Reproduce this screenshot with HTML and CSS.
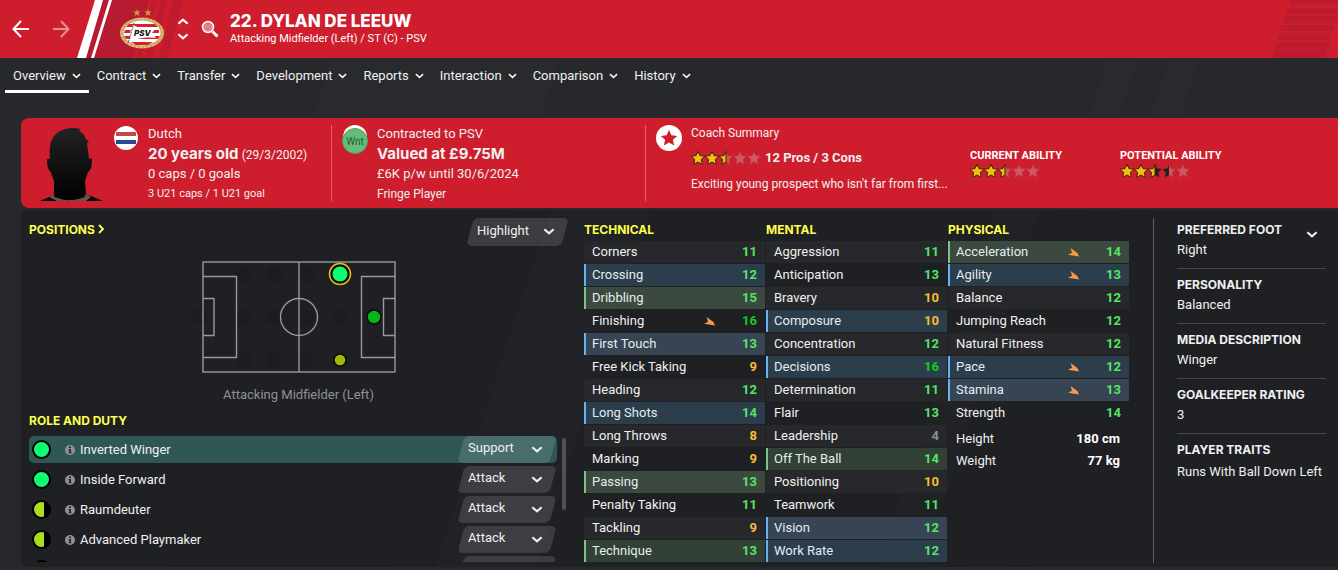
FILE: index.html
```
<!DOCTYPE html>
<html lang="en">

<head>
    <meta charset="UTF-8">
    <meta name="viewport" content="width=device-width, initial-scale=1.0">
    <title>Dylan de Leeuw - Overview</title>
    <link rel="stylesheet" href="styles.css">
</head>

<body>
    <!-- shared icons -->
    <svg class="icon-defs" aria-hidden="true">
        <symbol id="chevron" viewBox="0 0 10 6">
            <path d="M1 1 L5 4.6 L9 1" fill="none" stroke="currentColor" stroke-width="1.8"/>
        </symbol>
        <symbol id="info" viewBox="0 0 10 10">
            <circle cx="5" cy="5" r="5" fill="#8f9092"/>
            <path d="M4 1.6h2v1.5H4zM3.6 4h2.3v3.4h.7v.9H3.5v-.9h.7V4.9h-.6z" fill="#1f2024"/>
        </symbol>
        <symbol id="arrow" viewBox="0 0 11 9">
            <path d="M2.6 0 L9.4 5 L11 8.6 L0 6.8 L4 4.8 Z" fill="#f9974a"/>
        </symbol>
        <symbol id="star" viewBox="0 0 14 14" overflow="visible">
            <path d="M7 .4 L9 4.6 L13.8 5.1 L10.3 8.4 L11.3 13.4 L7 11 L2.7 13.4 L3.7 8.4 L.2 5.1 L5 4.6 Z"/>
        </symbol>
        <symbol id="half-star" viewBox="0 0 14 14" overflow="visible">
            <path d="M7 .4 L7 11 L2.7 13.4 L3.7 8.4 L.2 5.1 L5 4.6 Z"/>
        </symbol>
    </svg>

    <header class="top-bar">
        <svg class="stripes-left" viewBox="0 0 190 58" aria-hidden="true">
            <path d="M103 0H149L133 58H86Z" fill="#b71b31"/>
            <path d="M152 0h5l-16 58h-5zM161 0h7l-16 58h-7zM173 0h10l-16 58h-8z" fill="#be1b2f"/>
            <path d="M95 0h8L86 58h-9zM109 0h3L94 58h-3z" fill="#fff"/>
        </svg>
        <svg class="stripes-right" viewBox="0 0 66 58" aria-hidden="true">
            <path d="M18 0H66V5H17zM16 8H66V14H14zM13 16H66L65 23H11zM10 25H63L61 31H8zM8 33H60L58 40H5zM4 42H58L56 49H3zM2 50H55L53 58H0z" fill="#bd1c30"/>
        </svg>
        <button class="icon-btn back" aria-label="Back">
            <svg width="18" height="18" viewBox="0 0 18 18"><path d="M17 9H1.5M9 1L1.5 9L9 17" fill="none" stroke="currentColor" stroke-width="2"/></svg>
        </button>
        <button class="icon-btn forward" aria-label="Forward">
            <svg width="18" height="18" viewBox="0 0 18 18"><path d="M1 9H16.5M9 1L16.5 9L9 17" fill="none" stroke="currentColor" stroke-width="2"/></svg>
        </button>
        <a href="#" class="crest" aria-label="PSV">
            <svg width="44" height="40" viewBox="0 0 44 40">
                <path d="M17 0l1 2.600h2.800l-2.200 1.700.8 2.700-2.400-1.600-2.400 1.600.8-2.700L13.200 2.600H16zM28 0l1 2.600h2.800l-2.200 1.700.8 2.700-2.400-1.600-2.400 1.600.8-2.700-2.200-1.700H27z" fill="#c49a3e"/>
                <ellipse cx="22" cy="24" rx="22" ry="15.500" fill="#cda85b"/>
                <ellipse cx="22" cy="24" rx="21" ry="14.500" fill="none" stroke="#ead9ac" stroke-dasharray="2 2"/>
                <ellipse cx="22" cy="24" rx="18.500" ry="12.500" fill="#fff"/>
                <path d="M9 15h26l3 3H6zM5 21h34v3H4zM4 27h36l-2 3H6zM11 33h22l-5 3H16z" fill="#d9202f"/>
                <path d="M13 16Q21 21 36 19L32 24L36 29Q23 27 11 32Q8 24 13 16Z" fill="#fff"/>
                <path d="M14 14L8 34" stroke="#444" stroke-dasharray="2 1"/>
                <text x="14" y="27" class="crest-text">PSV</text>
            </svg>
        </a>
        <div class="switcher">
            <button class="icon-btn" aria-label="Previous player"><svg class="flip" width="12" height="7"><use href="#chevron"/></svg></button>
            <button class="icon-btn" aria-label="Next player"><svg width="12" height="7"><use href="#chevron"/></svg></button>
        </div>
        <button class="icon-btn search" aria-label="Search">
            <svg width="18" height="18" viewBox="0 0 18 18"><circle cx="7" cy="7" r="5.500" fill="#e8808b" stroke="#fff" stroke-width="1.500"/><path d="M11.500 11.500L16.500 16.500" stroke="#fff" stroke-width="3"/></svg>
        </button>
        <div class="title">
            <h1>22. DYLAN DE LEEUW</h1>
            <p>Attacking Midfielder (Left) / ST (C) - PSV</p>
        </div>
    </header>

    <nav class="tabs">
        <button class="tab active">Overview <svg><use href="#chevron"/></svg></button>
        <button class="tab">Contract <svg><use href="#chevron"/></svg></button>
        <button class="tab">Transfer <svg><use href="#chevron"/></svg></button>
        <button class="tab">Development <svg><use href="#chevron"/></svg></button>
        <button class="tab">Reports <svg><use href="#chevron"/></svg></button>
        <button class="tab">Interaction <svg><use href="#chevron"/></svg></button>
        <button class="tab">Comparison <svg><use href="#chevron"/></svg></button>
        <button class="tab">History <svg><use href="#chevron"/></svg></button>
    </nav>

    <main>
        <section class="summary">
            <div class="cell person">
                <svg class="portrait" width="66" height="76" viewBox="0 0 66 76" aria-hidden="true">
                    <defs><linearGradient id="shade" x2="0" y2="1"><stop offset="0" stop-color="#222"/><stop offset="1" stop-color="#000"/></linearGradient></defs>
                    <path d="M1 75L15 69V55Q12 48 12 46Q8 44 8 34Q8 32 11 33Q9 14 18 7Q28 0 42 3L40 5Q46 8 46 12L50 16L48 17L50 33Q53 31 53 34Q53 44 49 46L46 55L47 68L64 75Z" fill="url(#shade)"/>
                    <path d="M14 69Q31 80 48 68L52 71L47 75H18L10 71Z" fill="#695053"/>
                    <path d="M18 69Q31 76 44 68L46 71Q32 77 15 71Z" fill="#050505"/>
                </svg>
                <svg class="badge" width="24" height="24" viewBox="0 0 24 24" aria-label="Netherlands"><circle cx="12" cy="12" r="12" fill="#fff"/><path d="M2 6h20v4H2z" fill="#c2474f"/><path d="M2 14h20v4H2z" fill="#2b4a94"/></svg>
                <div class="lines">
                    <p>Dutch</p>
                    <p><strong>20 years old</strong> <small>(29/3/2002)</small></p>
                    <p>0 caps / 0 goals</p>
                    <p class="youth">3 U21 caps / 1 U21 goal</p>
                </div>
            </div>
            <div class="cell contract">
                <svg class="badge" width="26" height="29" viewBox="0 0 26 29" aria-label="Wanted"><circle cx="13" cy="12" r="12" fill="#fff"/><circle cx="13" cy="16" r="12.500" fill="#66bb7b" stroke="#4aa468"/><text x="13" y="20" text-anchor="middle" class="badge-text">Wnt</text></svg>
                <div class="lines">
                    <p>Contracted to PSV</p>
                    <p><strong>Valued at £9.75M</strong></p>
                    <p>£6K p/w until 30/6/2024</p>
                    <p><small>Fringe Player</small></p>
                </div>
            </div>
            <div class="cell coach">
                <svg class="badge" width="26" height="26" viewBox="0 0 26 26" aria-hidden="true"><circle cx="13" cy="13" r="13" fill="#fff"/><path d="M13 5l2.400 5.300 5.800.6-4.300 3.900 1.200 5.700L13 17.600l-5.100 2.900 1.200-5.700-4.300-3.900 5.800-.6z" fill="#ce1d2c"/></svg>
                <div class="coach-lines">
                    <p><small>Coach Summary</small></p>
                    <p class="rating">
                        <span class="stars"><svg class="on"><use href="#star"/></svg><svg class="on"><use href="#star"/></svg><svg><use class="off" href="#star"/><use class="on" href="#half-star"/></svg><svg class="off"><use href="#star"/></svg><svg class="off"><use href="#star"/></svg></span>
                        <b>12 Pros / 3 Cons</b>
                    </p>
                    <p><small>Exciting young prospect who isn't far from first...</small></p>
                </div>
            </div>
            <div class="ability">
                <h2>CURRENT ABILITY</h2>
                <span class="stars"><svg class="on"><use href="#star"/></svg><svg class="on"><use href="#star"/></svg><svg><use class="off" href="#star"/><use class="on" href="#half-star"/></svg><svg class="off"><use href="#star"/></svg><svg class="off"><use href="#star"/></svg></span>
            </div>
            <div class="ability">
                <h2>POTENTIAL ABILITY</h2>
                <span class="stars"><svg class="on"><use href="#star"/></svg><svg class="on"><use href="#star"/></svg><svg><use class="maybe" href="#star"/><use class="on" href="#half-star"/></svg><svg><use class="off" href="#star"/><use class="maybe" href="#half-star"/></svg><svg class="off"><use href="#star"/></svg></span>
            </div>
        </section>

        <section class="panel">
            <div class="positions">
                <div class="positions-head">
                    <h2><a href="#">POSITIONS <svg width="7" height="10" viewBox="0 0 7 10"><path d="M1 1L5 5L1 9" fill="none" stroke="currentColor" stroke-width="1.800"/></svg></a></h2>
                    <div class="drop highlight">
                        <select aria-label="Highlight"><option>Highlight</option></select>
                        <svg><use href="#chevron"/></svg>
                    </div>
                </div>
                <svg class="pitch" width="194" height="112" viewBox="0 0 194 112" role="img" aria-label="Pitch positions">
                    <g fill="#1c1d20">
                        <circle cx="-2" cy="56" r="8"/>
                        <circle cx="42" cy="13" r="8"/><circle cx="72" cy="13" r="8"/><circle cx="104" cy="13" r="8"/>
                        <circle cx="42" cy="56" r="8"/><circle cx="72" cy="56" r="8"/><circle cx="104" cy="56" r="8"/><circle cx="138" cy="56" r="8"/>
                        <circle cx="42" cy="99" r="8"/><circle cx="72" cy="99" r="8"/><circle cx="104" cy="99" r="8"/>
                    </g>
                    <g fill="none" stroke="#98999b" stroke-width="1.400">
                        <rect x="1" y="1" width="192" height="110"/>
                        <path d="M97 1V111M1 15.500H34.500V96.500H1M1 37.500H12V74.500H1M193 15.500H159.500V96.500H193M193 37.500H181.500V74.500H193"/>
                        <circle cx="97" cy="56" r="18.500"/>
                    </g>
                    <circle cx="138" cy="13" r="10.500" fill="#0a0f0c" stroke="#f2b90f" stroke-width="1.500"/>
                    <circle cx="138" cy="13" r="7.500" fill="#0cff70"/>
                    <circle cx="172" cy="56" r="7" fill="#06b619" stroke="#0a0b0c" stroke-width="1.500"/>
                    <circle cx="138" cy="99" r="6" fill="#a4b808" stroke="#0a0b0c" stroke-width="1.500"/>
                </svg>
                <p class="position-name">Attacking Midfielder (Left)</p>

                <h2>ROLE AND DUTY</h2>
                <div class="roles-wrap">
                    <ul class="roles">
                        <li class="selected"><span class="dot"></span><svg class="info"><use href="#info"/></svg><span class="role">Inverted Winger</span>
                            <div class="drop"><select aria-label="Inverted Winger duty"><option>Support</option></select><svg><use href="#chevron"/></svg></div></li>
                        <li><span class="dot"></span><svg class="info"><use href="#info"/></svg><span class="role">Inside Forward</span>
                            <div class="drop"><select aria-label="Inside Forward duty"><option>Attack</option></select><svg><use href="#chevron"/></svg></div></li>
                        <li><span class="dot part"></span><svg class="info"><use href="#info"/></svg><span class="role">Raumdeuter</span>
                            <div class="drop"><select aria-label="Raumdeuter duty"><option>Attack</option></select><svg><use href="#chevron"/></svg></div></li>
                        <li><span class="dot part"></span><svg class="info"><use href="#info"/></svg><span class="role">Advanced Playmaker</span>
                            <div class="drop"><select aria-label="Advanced Playmaker duty"><option>Attack</option></select><svg><use href="#chevron"/></svg></div></li>
                        <li><span class="dot part"></span>
                            <div class="drop"></div></li>
                    </ul>
                    <div class="scrollbar"></div>
                </div>
            </div>

            <div class="attributes">
                <div>
                    <h2>TECHNICAL</h2>
                    <table>
                        <tr><th>Corners</th><td></td><td class="good">11</td></tr>
                        <tr class="blue"><th>Crossing</th><td></td><td class="good">12</td></tr>
                        <tr class="green"><th>Dribbling</th><td></td><td class="good">15</td></tr>
                        <tr><th>Finishing</th><td><svg class="arrow"><use href="#arrow"/></svg></td><td class="great">16</td></tr>
                        <tr class="blue"><th>First Touch</th><td></td><td class="good">13</td></tr>
                        <tr><th>Free Kick Taking</th><td></td><td class="fair">9</td></tr>
                        <tr><th>Heading</th><td></td><td class="good">12</td></tr>
                        <tr class="blue"><th>Long Shots</th><td></td><td class="good">14</td></tr>
                        <tr><th>Long Throws</th><td></td><td class="fair">8</td></tr>
                        <tr><th>Marking</th><td></td><td class="fair">9</td></tr>
                        <tr class="green"><th>Passing</th><td></td><td class="good">13</td></tr>
                        <tr><th>Penalty Taking</th><td></td><td class="good">11</td></tr>
                        <tr><th>Tackling</th><td></td><td class="fair">9</td></tr>
                        <tr class="green"><th>Technique</th><td></td><td class="good">13</td></tr>
                    </table>
                </div>
                <div>
                    <h2>MENTAL</h2>
                    <table>
                        <tr><th>Aggression</th><td></td><td class="good">11</td></tr>
                        <tr><th>Anticipation</th><td></td><td class="good">13</td></tr>
                        <tr><th>Bravery</th><td></td><td class="fair">10</td></tr>
                        <tr class="blue"><th>Composure</th><td></td><td class="fair">10</td></tr>
                        <tr><th>Concentration</th><td></td><td class="good">12</td></tr>
                        <tr class="blue"><th>Decisions</th><td></td><td class="great">16</td></tr>
                        <tr><th>Determination</th><td></td><td class="good">11</td></tr>
                        <tr><th>Flair</th><td></td><td class="good">13</td></tr>
                        <tr><th>Leadership</th><td></td><td class="poor">4</td></tr>
                        <tr class="green"><th>Off The Ball</th><td></td><td class="good">14</td></tr>
                        <tr><th>Positioning</th><td></td><td class="fair">10</td></tr>
                        <tr><th>Teamwork</th><td></td><td class="good">11</td></tr>
                        <tr class="blue"><th>Vision</th><td></td><td class="good">12</td></tr>
                        <tr class="blue"><th>Work Rate</th><td></td><td class="good">12</td></tr>
                    </table>
                </div>
                <div>
                    <h2>PHYSICAL</h2>
                    <table>
                        <tr class="green"><th>Acceleration</th><td><svg class="arrow"><use href="#arrow"/></svg></td><td class="good">14</td></tr>
                        <tr class="blue"><th>Agility</th><td><svg class="arrow"><use href="#arrow"/></svg></td><td class="good">13</td></tr>
                        <tr><th>Balance</th><td></td><td class="good">12</td></tr>
                        <tr><th>Jumping Reach</th><td></td><td class="good">12</td></tr>
                        <tr><th>Natural Fitness</th><td></td><td class="good">12</td></tr>
                        <tr class="blue"><th>Pace</th><td><svg class="arrow"><use href="#arrow"/></svg></td><td class="good">12</td></tr>
                        <tr class="blue"><th>Stamina</th><td><svg class="arrow"><use href="#arrow"/></svg></td><td class="good">13</td></tr>
                        <tr><th>Strength</th><td></td><td class="good">14</td></tr>
                    </table>
                    <dl class="body-size">
                        <dt>Height</dt><dd>180 cm</dd>
                        <dt>Weight</dt><dd>77 kg</dd>
                    </dl>
                </div>
            </div>

            <aside class="details">
                <button class="icon-btn more" aria-label="More"><svg width="12" height="7"><use href="#chevron"/></svg></button>
                <dl>
                    <div><dt>PREFERRED FOOT</dt><dd>Right</dd></div>
                    <div><dt>PERSONALITY</dt><dd>Balanced</dd></div>
                    <div><dt>MEDIA DESCRIPTION</dt><dd>Winger</dd></div>
                    <div><dt>GOALKEEPER RATING</dt><dd>3</dd></div>
                    <div><dt>PLAYER TRAITS</dt><dd class="traits">Runs With Ball Down Left</dd></div>
                </dl>
            </aside>
        </section>
    </main>
</body>

</html>
```
FILE: styles.css
```
* {
    box-sizing: border-box;
}

body {
    margin: 0;
    background: #27282c;
    background-image: linear-gradient(108deg, transparent 23%, #292a2e 23%, #292a2e 38%, transparent 38%, transparent 74%, #292a2e 74%, #292a2e 76%, transparent 76%, transparent 78%, #292a2e 78%, #292a2e 80%, transparent 80%);
    color: #f0f0f0;
    font: 13px/20px Roboto, "Liberation Sans", sans-serif;
}

h1,
h2,
p,
ul,
dl,
dd {
    margin: 0;
    padding: 0;
}

h2 {
    padding-top: 2px;
    font: 700 12px/20px Inter, sans-serif;
    color: #ffff4b;
}

a {
    color: inherit;
    text-decoration: none;
}

button,
select {
    font: inherit;
    color: inherit;
    background: none;
    border: 0;
    padding: 0;
    cursor: pointer;
}

small {
    font-size: 12px;
}

.icon-defs {
    position: absolute;
    width: 0;
    height: 0;
}

.icon-btn {
    display: block;
    line-height: 0;
}

/* top bar */

.top-bar {
    position: relative;
    display: flex;
    align-items: center;
    height: 58px;
    padding-left: 12px;
    background: #ce1d2c;
    color: #fff;
}

.top-bar > * {
    position: relative;
}

.top-bar .stripes-left,
.top-bar .stripes-right {
    position: absolute;
    top: 0;
    left: 0;
    height: 58px;
}

.top-bar .stripes-right {
    left: auto;
    right: 0;
}

.forward {
    margin-left: 22px;
    opacity: .5;
}

.crest {
    margin-left: 50px;
    height: 40px;
}

.crest-text {
    font: italic 800 8px Inter, sans-serif;
    fill: #111;
}

.switcher {
    display: grid;
    gap: 8px;
    margin: 0 12px 0 13px;
}

.flip {
    transform: rotate(180deg);
}

.title {
    margin-left: 11px;
}

.title h1 {
    font: 800 17px/20px Inter, sans-serif;
}

.title p {
    font-size: 11px;
    line-height: 16px;
}

/* tabs */

.tabs {
    display: flex;
    height: 60px;
    padding-left: 5px;
}

.tab {
    display: flex;
    align-items: center;
    gap: 6px;
    height: 35px;
    padding: 3px 8px 0;
    border-bottom: 3px solid transparent;
}

.tab.active {
    border-bottom-color: #fff;
}

.tab svg {
    width: 9px;
    height: 6px;
}

main {
    padding-left: 21px;
}

/* red summary card */

.summary {
    display: grid;
    grid-template-columns: 311fr 314fr 324fr 150fr 218fr;
    padding: 7px 0;
    background: #ce1d2c;
    border-radius: 8px 0 0 8px;
}

.cell {
    display: flex;
    height: 76px;
}

.person,
.contract {
    border-right: 1px solid #e3626d;
}

.person {
    padding-left: 18px;
}

.person .badge {
    margin: 1px 10px 0 9px;
}

.contract .badge,
.coach .badge {
    margin: 0 9px 0 10px;
}

.badge-text {
    font-size: 10px;
    fill: #1c5c35;
}

.portrait {
    margin-top: 1px;
}

.lines {
    white-space: nowrap;
}

.lines p {
    height: 20px;
    line-height: 18px;
}

.lines strong {
    font: 700 15px/18px Inter, sans-serif;
}

.lines .youth {
    font-size: 11px;
}

.coach-lines p {
    line-height: 16px;
    white-space: nowrap;
}

.coach-lines .rating {
    display: flex;
    align-items: center;
    gap: 4px;
    margin: 9px 0 10px;
}

.stars {
    display: flex;
}

.stars svg {
    width: 14px;
    height: 14px;
    overflow: visible;
}

.on {
    fill: #f6bd0c;
    stroke: #33290f;
}

.off {
    fill: #d55561;
    stroke: #b53542;
}

.maybe {
    fill: #22201f;
}

.ability {
    padding-top: 23px;
}

.ability h2 {
    padding: 0;
    color: #fff;
    font: 700 11px/16px Roboto, sans-serif;
}

/* main panel */

.panel {
    display: grid;
    grid-template-columns: 563fr 569fr 185fr;
    margin: 2px 0 3px;
    padding: 8px 0 4px;
    background: #1f2024;
    background-image: linear-gradient(108deg, transparent 37%, #212226 37%, #212226 44%, transparent 44%, transparent 68%, #212226 68%, #212226 71%, transparent 71%);
    border-radius: 8px 0 0 8px;
}

.positions {
    padding: 0 16px 0 8px;
}

.positions-head {
    display: flex;
    justify-content: space-between;
    height: 28px;
}

.drop {
    position: relative;
    width: 98px;
    height: 27px;
}

/* slanted plate behind the select */
.drop::before {
    content: "";
    position: absolute;
    inset: 0 3px;
    background: rgba(255, 255, 255, .13);
    border-radius: 5px;
    transform: skewX(-15deg);
}

.drop select {
    position: relative;
    appearance: none;
    width: 100%;
    height: 100%;
    padding: 0 0 3px 10px;
}

.drop svg {
    position: absolute;
    right: 13px;
    top: 10px;
    width: 12px;
    height: 7px;
    pointer-events: none;
}

.drop.highlight {
    width: 101px;
    height: 28px;
}

.pitch {
    display: block;
    margin: 15px auto 0;
    overflow: visible;
}

.position-name {
    margin: 12px 0 4px;
    text-align: center;
    color: #909194;
}

.roles-wrap {
    display: flex;
    margin: 5px 0 0;
}

.roles {
    flex: 1;
    max-height: 126px;
    overflow: hidden;
    list-style: none;
}

.roles li {
    display: flex;
    align-items: center;
    height: 27px;
    margin-bottom: 3px;
    padding: 0 1px 0 3px;
    border-radius: 5px;
}

.roles .selected {
    background: #2f5854;
}

.dot {
    width: 19px;
    height: 19px;
    border: 2px solid #000;
    border-radius: 50%;
    background: #0cff70;
}

.dot.part {
    background: linear-gradient(90deg, #abdc1e 10px, #000 10px);
}

.info {
    width: 10px;
    height: 10px;
    margin: 0 5px 0 14px;
}

.roles .drop {
    margin-left: auto;
}

.scrollbar {
    width: 4px;
    height: 72px;
    margin: 2px 2px 0 5px;
    border-radius: 2px;
    background: #505154;
}

/* attribute tables */

.attributes {
    display: grid;
    grid-template-columns: 1fr 1fr 1fr;
    gap: 1px;
    padding-right: 24px;
    align-content: start;
}

table {
    width: 100%;
    table-layout: fixed;
    border-spacing: 0 1px;
}

th,
td {
    height: 22px;
    padding: 0;
    line-height: 20px;
}

th {
    width: 118px;
    padding-left: 6px;
    border-left: 2px solid transparent;
    font-weight: 400;
    text-align: left;
    white-space: nowrap;
}

td:last-child {
    padding-right: 8px;
    font-weight: 700;
    text-align: right;
}

tr:nth-child(odd) {
    background: #27282c;
}

.blue,
.green {
    color: #e3edf0;
}

tr.blue {
    background: #2c3e4c;
}

tr.blue:nth-child(odd) {
    background: #364453;
}

.blue th {
    border-color: #65b3f3;
}

tr.green {
    background: #324036;
}

tr.green:nth-child(odd) {
    background: #3c493e;
}

.green th {
    border-color: #7cc586;
}

.arrow {
    display: block;
    width: 11px;
    height: 9px;
    margin-left: 2px;
}

.good {
    color: #55e566;
}

.great {
    color: #15cb1f;
}

.fair {
    color: #f6bd2f;
}

.poor {
    color: #899096;
}

.body-size {
    display: grid;
    grid-template-columns: 1fr auto;
    padding: 3px 9px 0 8px;
    line-height: 22px;
}

.body-size dd {
    color: #fff;
    font-weight: 700;
    text-align: right;
}

/* right column */

.details {
    position: relative;
    padding: 0 12px 0 23px;
    border-left: 1px solid #5d5e61;
}

.details dl > div {
    height: 55px;
    padding-top: 6px;
    border-bottom: 1px solid #46474a;
}

.details dl > div:first-child {
    height: 51px;
    padding-top: 2px;
}

.details dl > div:last-child {
    border-bottom: 0;
}

.details dt {
    font: 700 12px/20px Inter, sans-serif;
}

.details dd {
    line-height: 19px;
    white-space: nowrap;
}

.details .traits {
    line-height: 24px;
}

.more {
    position: absolute;
    top: 13px;
    right: 20px;
}
```
